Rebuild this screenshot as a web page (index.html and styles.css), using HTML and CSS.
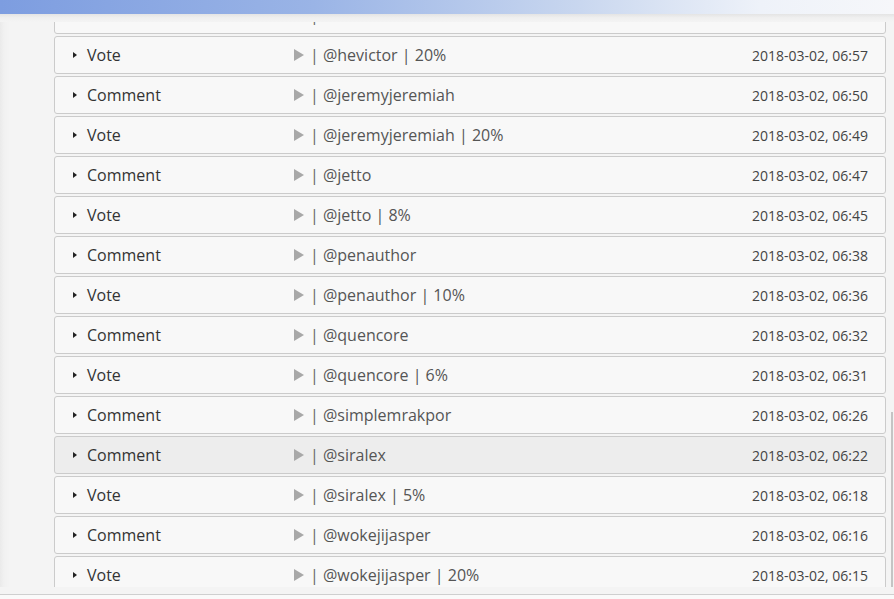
FILE: index.html
```html
<!DOCTYPE html>
<html>
<head>
<meta charset="utf-8">
<link rel="stylesheet" href="styles.css">
</head>
<body>
<div class="topbar"></div>
<div class="viewport">
  <div class="side"></div>
  <div class="list">
    <div class="row"><span class="caret"></span><span class="type">Comment</span><span class="info"><span class="play"></span><span class="pipe">|</span> @hevictor</span><span class="date">2018-03-02 06:58</span></div>
    <div class="row"><span class="caret"></span><span class="type">Vote</span><span class="info"><span class="play"></span><span class="pipe">|</span> @hevictor | 20%</span><span class="date">2018-03-02, 06:57</span></div>
    <div class="row"><span class="caret"></span><span class="type">Comment</span><span class="info"><span class="play"></span><span class="pipe">|</span> @jeremyjeremiah</span><span class="date">2018-03-02, 06:50</span></div>
    <div class="row"><span class="caret"></span><span class="type">Vote</span><span class="info"><span class="play"></span><span class="pipe">|</span> @jeremyjeremiah | 20%</span><span class="date">2018-03-02, 06:49</span></div>
    <div class="row"><span class="caret"></span><span class="type">Comment</span><span class="info"><span class="play"></span><span class="pipe">|</span> @jetto</span><span class="date">2018-03-02, 06:47</span></div>
    <div class="row"><span class="caret"></span><span class="type">Vote</span><span class="info"><span class="play"></span><span class="pipe">|</span> @jetto | 8%</span><span class="date">2018-03-02, 06:45</span></div>
    <div class="row"><span class="caret"></span><span class="type">Comment</span><span class="info"><span class="play"></span><span class="pipe">|</span> @penauthor</span><span class="date">2018-03-02, 06:38</span></div>
    <div class="row"><span class="caret"></span><span class="type">Vote</span><span class="info"><span class="play"></span><span class="pipe">|</span> @penauthor | 10%</span><span class="date">2018-03-02, 06:36</span></div>
    <div class="row"><span class="caret"></span><span class="type">Comment</span><span class="info"><span class="play"></span><span class="pipe">|</span> @quencore</span><span class="date">2018-03-02, 06:32</span></div>
    <div class="row"><span class="caret"></span><span class="type">Vote</span><span class="info"><span class="play"></span><span class="pipe">|</span> @quencore | 6%</span><span class="date">2018-03-02, 06:31</span></div>
    <div class="row"><span class="caret"></span><span class="type">Comment</span><span class="info"><span class="play"></span><span class="pipe">|</span> @simplemrakpor</span><span class="date">2018-03-02, 06:26</span></div>
    <div class="row hover"><span class="caret"></span><span class="type">Comment</span><span class="info"><span class="play"></span><span class="pipe">|</span> @siralex</span><span class="date">2018-03-02, 06:22</span></div>
    <div class="row"><span class="caret"></span><span class="type">Vote</span><span class="info"><span class="play"></span><span class="pipe">|</span> @siralex | 5%</span><span class="date">2018-03-02, 06:18</span></div>
    <div class="row"><span class="caret"></span><span class="type">Comment</span><span class="info"><span class="play"></span><span class="pipe">|</span> @wokejijasper</span><span class="date">2018-03-02, 06:16</span></div>
    <div class="row"><span class="caret"></span><span class="type">Vote</span><span class="info"><span class="play"></span><span class="pipe">|</span> @wokejijasper | 20%</span><span class="date">2018-03-02, 06:15</span></div>
  </div>
  <div class="scroll"><div class="thumb"></div></div>
</div>
<div class="bottom"></div>
</body>
</html>
```
FILE: styles.css
```css
html, body {
  margin: 0;
  padding: 0;
  width: 894px;
  height: 599px;
  overflow: hidden;
  background: #f4f4f4;
  font-family: "Open Sans", "DejaVu Sans", sans-serif;
}
.topbar {
  position: absolute;
  left: 0;
  top: 0;
  width: 894px;
  height: 14px;
  background: linear-gradient(to right, #7d9de0 0%, #9ab4e6 35%, #c9d7ef 65%, #eef2f9 85%, #f6f7fa 100%);
  z-index: 2;
}
.topbar::after {
  content: "";
  position: absolute;
  left: 0;
  top: 14px;
  width: 894px;
  height: 8px;
  background: linear-gradient(to bottom, #e4e4e4 0%, #efefef 45%, #f4f4f4 100%);
}
.viewport {
  display: flex;
  height: 587px;
  overflow: hidden;
}
.side {
  width: 54px;
  flex: none;
  background: linear-gradient(to right, #eaeaea 0px, #f1f1f1 4px, #f4f4f4 10px);
}
.list {
  width: 832px;
  flex: none;
  margin-top: -4px;
  display: flex;
  flex-direction: column;
  gap: 2px;
}
.row {
  flex: none;
  height: 36px;
  box-sizing: content-box;
  border: 1px solid #cbcbcb;
  border-radius: 3px;
  background: #f8f8f8;
  display: flex;
  align-items: center;
  color: #333;
  font-size: 16px;
}
.row.hover {
  background: #ededed;
}
.caret {
  width: 0;
  height: 0;
  margin-left: 18px;
  border-top: 3.5px solid transparent;
  border-bottom: 3.5px solid transparent;
  border-left: 4px solid #222;
}
.type {
  margin-left: 10px;
  width: 207px;
  color: #333;
}
.info {
  flex: 1;
  display: flex;
  align-items: center;
  color: #555;
  white-space: pre;
}
.play {
  width: 0;
  height: 0;
  border-top: 6px solid transparent;
  border-bottom: 6px solid transparent;
  border-left: 10px solid #a8a8a8;
  margin-right: 6px;
}
.pipe {
  color: #666;
}
.date {
  font-size: 14px;
  color: #444;
  margin-right: 17px;
}
.scroll {
  flex: 1;
  position: relative;
}
.thumb {
  position: absolute;
  right: 1px;
  top: 412px;
  width: 2px;
  height: 180px;
  background: #c4c4c4;
}
.bottom {
  height: 12px;
  background: linear-gradient(to bottom, #f4f4f4 0px, #f4f4f4 7px, #cfcfcf 7px, #cfcfcf 8px, #fafafa 8px);
}
```
